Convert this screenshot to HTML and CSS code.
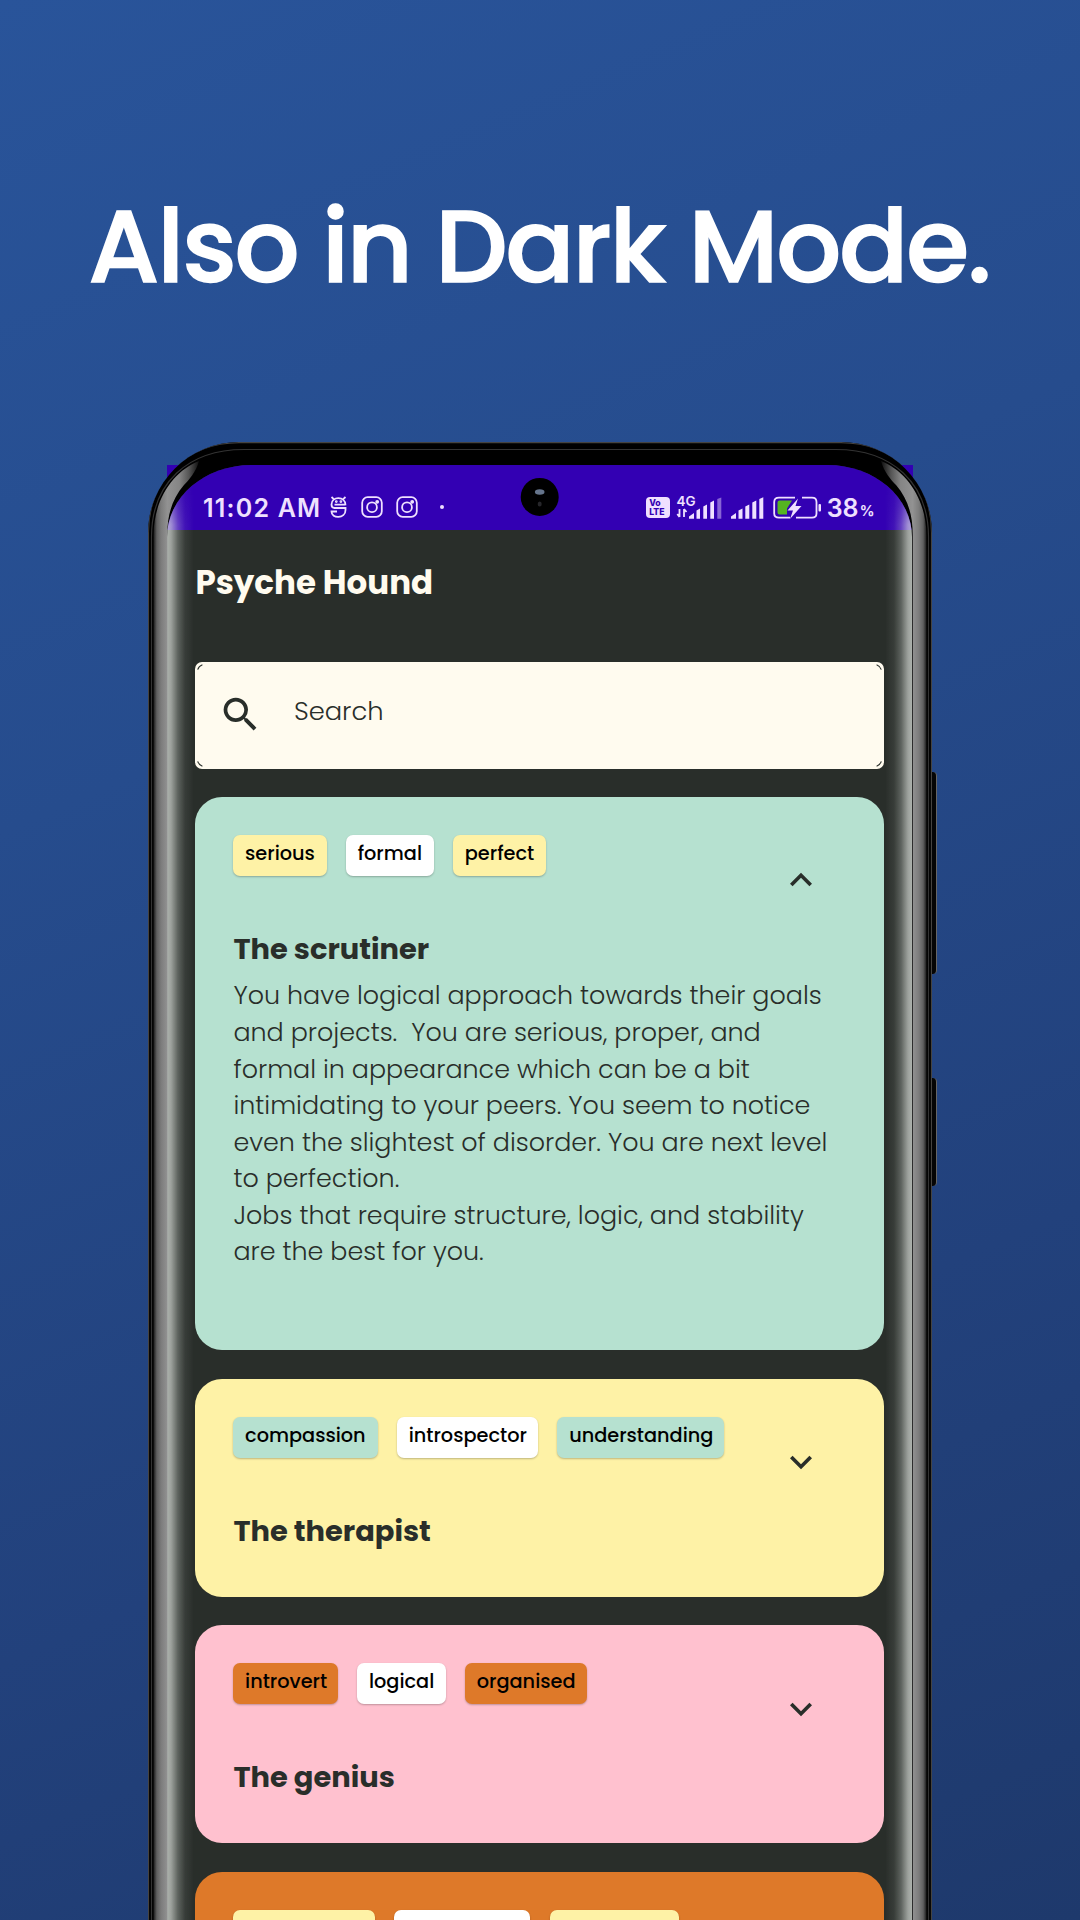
FILE: index.html
```html
<!DOCTYPE html>
<html lang="en">
<head>
<meta charset="utf-8">
<title>Psyche Hound – Dark Mode</title>
<link rel="stylesheet" href="styles.css">
</head>
<body>
<svg class="defs" width="0" height="0" aria-hidden="true">
  <symbol id="insta" viewBox="0 0 22 22"><rect x="1.2" y="1.2" width="19.6" height="19.6" rx="5.5"/><circle cx="11" cy="11.2" r="4.9"/><circle class="solid" cx="16.2" cy="5.8" r="1"/></symbol>
  <symbol id="more" viewBox="0 0 24 24"><path d="M7.41 8.59 12 13.17l4.59-4.58L18 10l-6 6-6-6z"/></symbol>
  <symbol id="less" viewBox="0 0 24 24"><path d="M12 8l-6 6 1.41 1.41L12 10.83l4.59 4.58L18 14z"/></symbol>
  <symbol id="arc" viewBox="0 0 6 6"><path d="M.7 5.6Q1.8 2.2 5.4.8"/></symbol>
</svg>
<main class="poster">
  <h1 class="headline">Also in Dark Mode.</h1>
  <div class="device">
    <i class="side-button power"></i><i class="side-button volume"></i>
    <i class="screen-corner left"></i><i class="screen-corner right"></i>
    <div class="frame">
      <div class="screen">
        <div class="status">
          <span class="clock">11:02 AM</span>
          <svg class="line face" width="17" height="22" viewBox="0 0 17 22"><path d="M1.500 1l2.300 2.200M15.500 1l-2.300 2.200M15.500 9.200C15.500-.2 1.500-.2 1.500 8.500Q1.500 12 4.500 12H15.500V14C15.500 23 1.500 23 1.500 15.500H7M4.500 8.700H15.500"/><circle class="solid" cx="6.300" cy="5.600" r=".5"/><circle class="solid" cx="10.900" cy="5.600" r=".5"/></svg>
          <svg class="line insta" width="22" height="22"><use href="#insta"/></svg>
          <svg class="line insta second" width="22" height="22"><use href="#insta"/></svg>
          <i class="dot"></i>
          <div class="volte"><span>Vo</span><span>LTE</span></div>
          <svg class="fill lte" width="45" height="24" viewBox="0 0 45 24"><text x="-.5" y="10">4G</text><path d="M2.500 21V13M2.500 21L.3 18M7 13V21M7 13l2.500 3" class="arrows"/><path d="M12 20.500l5-3.500v5.700h-5zM19.500 14.500l3.500-2v10.200h-3.500zM26.300 10.500l3.700-2v14.200h-3.700zM33.300 6.500l3.700-2v18.200h-3.700z"/><path class="dim" d="M40.300 3l4-1.500v21.200h-4z"/></svg>
          <svg class="fill bars" width="33" height="24" viewBox="0 0 33 24"><path d="M0 20.500l5-3.500v5.700H0zM7.500 14.500l4-2v10.200h-4zM14.300 10.500l4-2v14.200h-4zM21.300 6.500l4-2v18.200h-4zM28.300 3l4-1.700v21.400h-4z"/></svg>
          <svg class="battery" width="49" height="24" viewBox="0 0 49 24"><path class="cell" d="M22 1.700H6Q1.200 1.700 1.200 6V17.500Q1.200 21.700 6 21.700H17M29 1.700H39Q43.500 1.700 43.500 6V17.500Q43.500 21.700 39 21.700H23"/><path class="charge" d="M6.500 4.500H19L14 12.500V18.500H6.500Q4.500 18.500 4.500 16.500V6.500Q4.500 4.500 6.500 4.500Z"/><path class="bolt" d="M25 2.500 14.500 14.500H20L17 23 28.500 10H22.500Z"/><rect class="bolt" x="45.500" y="8" width="2.500" height="7.500" rx="1"/></svg>
          <span class="percent">38</span><span class="sign">%</span>
        </div>
        <div class="app">
          <h2 class="app-title">Psyche Hound</h2>
          <div class="search">
            <svg class="search-icon" viewBox="0 0 24 24"><path d="M15.500 14h-.79l-.28-.27A6.471 6.471 0 0 0 16 9.500 6.500 6.500 0 1 0 9.500 16c1.610 0 3.090-.59 4.230-1.570l.27.28v.79l5 4.990L20.490 19l-4.990-5zm-6 0C7.010 14 5 11.990 5 9.500S7.010 5 9.500 5 14 7.010 14 9.500 11.990 14 9.500 14z"/></svg>
            <span class="placeholder">Search</span>
            <svg class="arc tl"><use href="#arc"/></svg><svg class="arc tr"><use href="#arc"/></svg><svg class="arc bl"><use href="#arc"/></svg><svg class="arc br"><use href="#arc"/></svg>
          </div>
          <article class="card mint open">
            <div class="card-top"><span class="chip yellow w-serious">serious</span><span class="chip white w-formal">formal</span><span class="chip yellow w-perfect">perfect</span><svg class="chevron"><use href="#less"/></svg></div>
            <h3>The scrutiner</h3>
            <p>You have logical approach towards their goals<br>and projects. &nbsp;You are serious, proper, and<br>formal in appearance which can be a bit<br>intimidating to your peers. You seem to notice<br>even the slightest of disorder. You are next level<br>to perfection.<br>Jobs that require structure, logic, and stability<br>are the best for you.</p>
          </article>
          <article class="card yellow">
            <div class="card-top"><span class="chip mint w-compassion">compassion</span><span class="chip white w-introspector">introspector</span><span class="chip mint w-understanding">understanding</span><svg class="chevron down"><use href="#more"/></svg></div>
            <h3>The therapist</h3>
          </article>
          <article class="card pink">
            <div class="card-top"><span class="chip orange w-introvert">introvert</span><span class="chip white w-logical">logical</span><span class="chip orange w-organised">organised</span><svg class="chevron down"><use href="#more"/></svg></div>
            <h3>The genius</h3>
          </article>
          <article class="card orange">
            <div class="card-top"><span class="chip yellow w-a"></span><span class="chip white w-b"></span><span class="chip yellow w-c"></span></div>
          </article>
        </div>
        <i class="gloss"></i>
      </div>
      <svg class="rim" width="784" height="1478" viewBox="148 442 784 1478">
        <defs><linearGradient id="steel" gradientUnits="userSpaceOnUse" x1="153" x2="201" y1="0" y2="0"><stop offset="0" stop-color="#111"/><stop offset=".08" stop-color="#606060"/><stop offset=".17" stop-color="#7c7c7c"/><stop offset=".3" stop-color="#929292"/><stop offset=".55" stop-color="#858585"/><stop offset=".75" stop-color="#555"/><stop offset="1" stop-color="#000"/></linearGradient>
        <g id="side"><path fill="url(#steel)" d="M153.500 1920V535C154 498 174 471 199 461C196 472 189 480 184 485C172 499 167.300 515 167.300 535V1920Z"/></g></defs>
        <use href="#side"/><use href="#side" transform="translate(1080 0) scale(-1 1)"/>
        <path class="outer" d="M148.500 1920V532C148.500 480 187 442.700 239 442.700H841C893 442.700 931.500 480 931.500 532V1920"/>
        <path class="inner" d="M151.500 1920V537C151.500 483 188 449.500 244 449.500H836C892 449.500 928.500 483 928.500 537V1920"/>
        <circle cx="539.700" cy="496.900" r="19"/><ellipse cx="539.700" cy="492" rx="4.800" ry="2.800" fill="#66758c"/><ellipse cx="539.700" cy="504" rx="2" ry="2.500" fill="#26262a"/>
      </svg>
    </div>
  </div>
</main>
</body>
</html>
```
FILE: styles.css
```css
* { box-sizing: border-box; }
body { margin: 0; font-family: Poppins, Inter, "Liberation Sans", sans-serif; }
.defs { position: absolute; }
.poster { width: 1080px; height: 1920px; overflow: hidden; display: flex; flex-direction: column; align-items: center; background: linear-gradient(157deg, #29549a 0%, #264c8d 35%, #22417c 70%, #1e396c 100%); }
.headline { margin: 186.5px 2px 135.5px 0; height: 120px; line-height: 120px; font-size: 102px; font-weight: 500; letter-spacing: -2.1px; color: #fff; -webkit-text-stroke: 1.6px #fff; white-space: nowrap; }

/* phone body */
.device { position: relative; width: 784px; height: 1478px; flex: none; }
.frame { position: relative; height: 1478px; padding: 23px 20px 0 19px; background: #000; border-radius: 91px 91px 0 0; overflow: hidden; }
.side-button { position: absolute; right: -5px; width: 8px; background: #050505; border-right: 1px solid #666; border-radius: 0 4px 4px 0; }
.power { top: 330px; height: 202px; }
.volume { top: 636px; height: 108px; }
.screen-corner { position: absolute; top: 23px; width: 30px; height: 30px; background: #3300b3; }
.screen-corner.left { left: 19px; }
.screen-corner.right { right: 19px; }
.rim { position: absolute; inset: 0; }
.rim .outer, .rim .inner { fill: none; stroke: #454340; stroke-width: 1.2; }
.rim .inner { stroke: #333; }
.screen { position: relative; width: 745px; height: 1455px; overflow: hidden; background: #292e2a; border-radius: 84px 84px 0 0 / 72px 72px 0 0; }
.gloss { position: absolute; inset: 0; background: linear-gradient(90deg, rgba(235,240,235,.68), rgba(235,240,235,.6) 4px, rgba(235,240,235,.27) 11px, rgba(235,240,235,.08) 18px, transparent 27px, transparent 718px, rgba(235,240,235,.08) 727px, rgba(235,240,235,.27) 734px, rgba(235,240,235,.6) 741px, rgba(235,240,235,.68)); -webkit-mask-image: linear-gradient(transparent 0, #000 60px); mask-image: linear-gradient(transparent 0, #000 60px); }

/* status bar */
.status { height: 64.5px; padding: 31px 39.3px 0 36px; display: flex; align-items: flex-start; background: #3300b3; color: #efe0ff; font-family: Inter, "Liberation Sans", sans-serif; font-weight: 600; }
.clock { width: 127px; font-size: 25px; line-height: 25px; letter-spacing: 1.2px; white-space: nowrap; }
.line { flex: none; fill: none; stroke: #efe0ff; stroke-width: 1.8; }
.line .solid, .fill { fill: #efe0ff; }
.insta { margin-left: 14px; }
.insta.second { margin-left: 13px; }
.dot { width: 4px; height: 4px; margin: 9px 0 0 22px; border-radius: 50%; background: #efe0ff; }
.volte { width: 24px; height: 20.5px; margin: 1px 7px 0 auto; padding: 2px 3px 0 3.5px; border-radius: 4px; background: #efe0ff; color: #3300b3; font-size: 8.7px; line-height: 8.5px; font-weight: 800; display: flex; flex-direction: column; }
.lte { flex: none; font-size: 13.5px; overflow: visible; }
.arrows { fill: none; stroke: #efe0ff; stroke-width: 1.8; }
.dim { opacity: .45; }
.bars { margin-left: 9px; flex: none; }
.battery { margin-left: 9px; flex: none; }
.cell { fill: none; stroke: #efe0ff; stroke-width: 1.8; }
.charge { fill: #55b421; }
.bolt { fill: #efe0ff; }
.percent { width: 33px; margin-left: 5px; font-size: 25px; line-height: 25px; }
.sign { width: 13px; margin-top: 3px; font-size: 14.5px; line-height: 24px; font-weight: 700; }

/* app content */
.app { padding: 33px 28px 0 28.4px; }
.app-title { margin: 0 0 59.5px; font-size: 32.5px; line-height: 40px; font-weight: 700; color: #fffbef; }
.search { position: relative; height: 106.5px; padding: 30.3px 22.8px 0; display: flex; align-items: flex-start; background: #fffbef; border-radius: 7px; }
.search-icon { width: 45px; height: 45px; fill: #292e2a; }
.placeholder { margin: 3.3px 0 0 30.7px; font-size: 25.8px; line-height: 30px; font-weight: 300; color: #292e2a; }
.arc { position: absolute; width: 6px; height: 6px; fill: none; stroke: #292e2a; stroke-width: 1.1; }
.arc.tl { left: 2px; top: 2px; }
.arc.tr { right: 2px; top: 2px; transform: scaleX(-1); }
.arc.bl { left: 2px; bottom: 2px; transform: scaleY(-1); }
.arc.br { right: 2px; bottom: 2px; transform: scale(-1); }
.card { height: 218px; margin-top: 28.5px; padding: 38px 38px 38px 38px; border-radius: 27px; color: #292e2a; }
.card.open { height: 553px; }
.card-top { display: flex; gap: 19.3px; height: 41.3px; }
.chip { height: 41.3px; padding-left: 11.7px; border-radius: 7px; font-size: 19.3px; line-height: 37.5px; font-weight: 500; color: #000; box-shadow: 0 1px 2px rgba(0,0,0,.25); white-space: nowrap; }
.mint { background: #b6e1d0; }
.yellow { background: #fef2a6; }
.pink { background: #ffc1cf; }
.orange { background: #de7929; }
.white { background: #fff; }
.w-serious { width: 93.3px; }
.w-formal { width: 87.8px; }
.w-perfect { width: 92.6px; }
.w-compassion { width: 144.3px; }
.w-introspector { width: 141.2px; }
.w-understanding { width: 167px; }
.w-introvert { width: 104.6px; }
.w-logical { width: 88.5px; }
.w-organised { width: 122.4px; }
.w-a { width: 141.6px; }
.w-b { width: 136px; }
.w-c { width: 129.7px; }
.chevron { flex: none; width: 44px; height: 44px; margin: 22.8px 23px 0 auto; fill: #292e2a; }
.chevron.down { margin-top: 23.8px; }
h3 { margin: 54.9px 0 0; font-size: 28.9px; line-height: 36px; font-weight: 700; }
p { margin: 10.2px 0 0; font-size: 25.4px; line-height: 36.57px; font-weight: 300; white-space: nowrap; }
```
